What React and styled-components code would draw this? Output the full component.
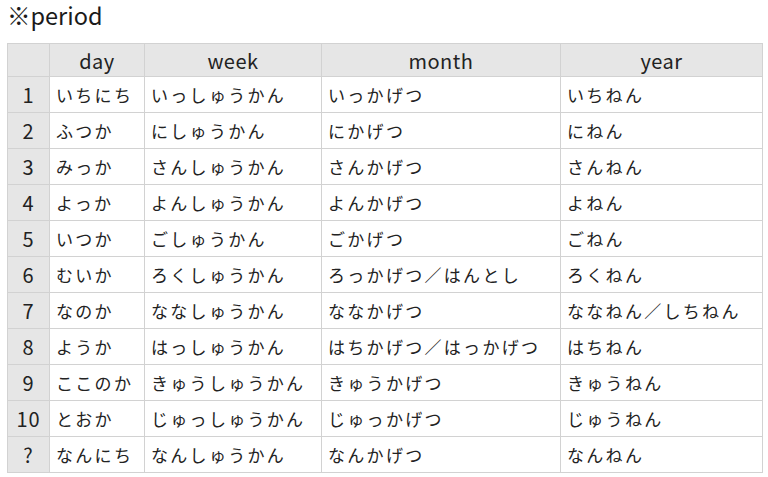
import React from 'react';
import styled, { createGlobalStyle } from 'styled-components';

const GlobalStyle = createGlobalStyle`
  body {
    margin: 0;
    background: #ffffff;
    font-family: "Noto Sans CJK JP", "Noto Sans", sans-serif;
    color: #222;
  }
`;

const Page = styled.div`
  padding: 0 6px 0 7px;
`;

const Title = styled.h1`
  margin: 0;
  height: 43px;
  font-size: 23.5px;
  font-weight: 400;
  line-height: 30px;
  color: #1a1a1a;
`;

const Table = styled.table`
  border-collapse: collapse;
  table-layout: fixed;
  width: 755px;
`;

const HeadCell = styled.th`
  height: 32px;
  padding: 0;
  background: #e6e6e6;
  border: 1.5px solid #d2d2d2;
  font-size: 20px;
  font-weight: 400;
  letter-spacing: 0.5px;
  text-align: center;
  color: #222;
`;

const NumCell = styled.td`
  height: 35px;
  padding: 0;
  background: #e6e6e6;
  border: 1.5px solid #d2d2d2;
  text-align: center;
  font-size: 20px;
  letter-spacing: 1px;
`;

const Cell = styled.td`
  height: 35px;
  padding: 0 0 0 6px;
  border: 1.5px solid #d2d2d2;
  font-size: 17px;
  letter-spacing: 2.3px;
  white-space: nowrap;
  overflow: hidden;
`;

const cols = [42, 95, 177, 239, 202];

const rows = [
  ['1', 'いちにち', 'いっしゅうかん', 'いっかげつ', 'いちねん'],
  ['2', 'ふつか', 'にしゅうかん', 'にかげつ', 'にねん'],
  ['3', 'みっか', 'さんしゅうかん', 'さんかげつ', 'さんねん'],
  ['4', 'よっか', 'よんしゅうかん', 'よんかげつ', 'よねん'],
  ['5', 'いつか', 'ごしゅうかん', 'ごかげつ', 'ごねん'],
  ['6', 'むいか', 'ろくしゅうかん', 'ろっかげつ／はんとし', 'ろくねん'],
  ['7', 'なのか', 'ななしゅうかん', 'ななかげつ', 'ななねん／しちねん'],
  ['8', 'ようか', 'はっしゅうかん', 'はちかげつ／はっかげつ', 'はちねん'],
  ['9', 'ここのか', 'きゅうしゅうかん', 'きゅうかげつ', 'きゅうねん'],
  ['10', 'とおか', 'じゅっしゅうかん', 'じゅっかげつ', 'じゅうねん'],
  ['?', 'なんにち', 'なんしゅうかん', 'なんかげつ', 'なんねん'],
];

export default function App() {
  return (
    <Page>
      <GlobalStyle />
      <Title>※period</Title>
      <Table>
        <colgroup>
          {cols.map((w, i) => (
            <col key={i} style={{ width: w }} />
          ))}
        </colgroup>
        <thead>
          <tr>
            <HeadCell />
            <HeadCell>day</HeadCell>
            <HeadCell>week</HeadCell>
            <HeadCell>month</HeadCell>
            <HeadCell>year</HeadCell>
          </tr>
        </thead>
        <tbody>
          {rows.map((r) => (
            <tr key={r[0]}>
              <NumCell>{r[0]}</NumCell>
              {r.slice(1).map((t, i) => (
                <Cell key={i}>{t}</Cell>
              ))}
            </tr>
          ))}
        </tbody>
      </Table>
    </Page>
  );
}
